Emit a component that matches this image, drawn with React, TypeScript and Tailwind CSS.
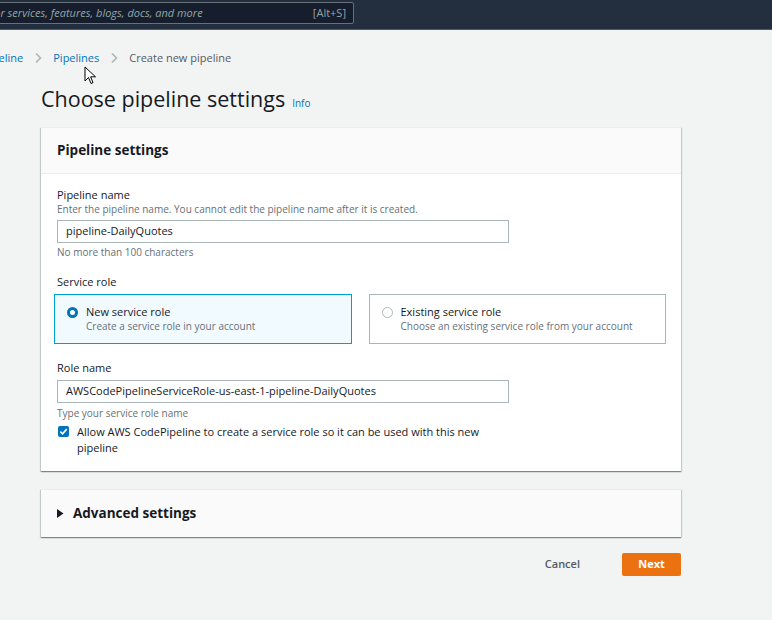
import React from 'react';

const font = { fontFamily: '"Open Sans", "Noto Sans", sans-serif' };

const Chevron = () => (
    <svg className="w-[8px] h-[12px] mx-[11px]" viewBox="0 0 8 12" fill="none">
        <path d="M2 1.5 L6.5 6 L2 10.5" stroke="#aab7b8" strokeWidth="1.6" />
    </svg>
);

const Cursor = () => (
    <svg className="absolute left-[84px] top-[66px] w-[13px] h-[19px]" viewBox="0 0 13 19">
        <path d="M1 1 L1 15 L4.5 11.5 L7 17.5 L9 16.6 L6.6 10.8 L11.5 10.8 Z" fill="#fff" stroke="#000" strokeWidth="1" strokeLinejoin="round" />
    </svg>
);

const Radio = ({ checked }: { checked: boolean }) =>
    checked ? (
        <span className="mt-[3px] w-[11px] h-[11px] rounded-full bg-white border-[3.5px] border-[#0073bb] shrink-0" />
    ) : (
        <span className="mt-[3px] w-[11px] h-[11px] rounded-full bg-white border border-[#aab7b8] shrink-0" />
    );

const Tile = ({ checked, title, desc }: { checked: boolean; title: string; desc: string }) => (
    <div
        className={
            checked
                ? 'h-[50px] border border-[#00a1c9] bg-[#f1faff] flex gap-[8px] pl-[12px] pt-[9px]'
                : 'h-[50px] border border-[#aab7b8] bg-white flex gap-[8px] pl-[12px] pt-[9px]'
        }
    >
        <Radio checked={checked} />
        <div>
            <div className="text-[11px] leading-[16px] text-[#16191f]">{title}</div>
            <div className="text-[10px] leading-[12px] text-[#687078]">{desc}</div>
        </div>
    </div>
);

const App = () => {
    return (
        <div className="relative w-[772px] h-[620px] bg-[#f2f3f3] overflow-hidden" style={font}>
            {/* top nav */}
            <header className="h-[30px] bg-[#232f3e] border-b border-[#545b64] pt-[2px]">
                <div className="ml-[-2px] w-[356px] h-[22px] bg-[#161e2d] border border-[#687078] rounded-[2px] flex items-center overflow-hidden">
                    <span className="ml-[-44px] text-[11px] italic text-[#95a5a6] whitespace-nowrap">
                        Search for services, features, blogs, docs, and more
                    </span>
                    <span className="ml-auto mr-[7px] text-[11px] text-[#95a5a6]">[Alt+S]</span>
                </div>
            </header>

            {/* breadcrumbs */}
            <nav className="flex items-center h-[16px] mt-[20px] text-[11px] whitespace-nowrap">
                <span className="ml-[-44px] text-[#0073bb]">CodePipeline</span>
                <Chevron />
                <span className="text-[#0073bb]">Pipelines</span>
                <Chevron />
                <span className="text-[#545b64]">Create new pipeline</span>
            </nav>

            <div className="ml-[41px] w-[640px]">
                <div className="flex items-baseline gap-[7px] mt-[17px] h-[32px]">
                    <h1 className="text-[21.5px] leading-[32px] text-[#16191f]">Choose pipeline settings</h1>
                    <a className="text-[10px] text-[#0073bb]">Info</a>
                </div>

                {/* pipeline settings card */}
                <section className="mt-[12px] bg-white shadow-[0_1px_1px_0_rgba(0,28,36,0.3),1px_1px_1px_0_rgba(0,28,36,0.15),-1px_1px_1px_0_rgba(0,28,36,0.15)] border-t border-[#eaeded]">
                    <div className="h-[46px] bg-[#fafafa] border-b border-[#eaeded] flex items-center px-[16px]">
                        <h2 className="text-[13.5px] font-bold text-[#16191f]">Pipeline settings</h2>
                    </div>
                    <div className="px-[16px] pt-[13px] pb-[15px]">
                        <label className="block text-[11px] leading-[16px] text-[#16191f]">Pipeline name</label>
                        <div className="text-[10px] leading-[12px] text-[#687078]">
                            Enter the pipeline name. You cannot edit the pipeline name after it is created.
                        </div>
                        <div className="mt-[5px] w-[452px] h-[23px] border border-[#aab7b8] flex items-center px-[8px] text-[11px] text-[#16191f]">
                            pipeline-DailyQuotes
                        </div>
                        <div className="mt-[3px] text-[10px] leading-[13px] text-[#687078]">No more than 100 characters</div>

                        <label className="block mt-[15px] text-[11px] leading-[16px] text-[#16191f]">Service role</label>
                        <div className="mt-[4px] ml-[-3px] w-[612px] grid grid-cols-2 gap-[17px]">
                            <Tile checked title="New service role" desc="Create a service role in your account" />
                            <Tile checked={false} title="Existing service role" desc="Choose an existing service role from your account" />
                        </div>

                        <label className="block mt-[16px] text-[11px] leading-[16px] text-[#16191f]">Role name</label>
                        <div className="mt-[4px] w-[452px] h-[23px] border border-[#aab7b8] flex items-center px-[8px] text-[11px] text-[#16191f]">
                            AWSCodePipelineServiceRole-us-east-1-pipeline-DailyQuotes
                        </div>
                        <div className="mt-[4px] text-[10px] leading-[13px] text-[#687078]">Type your service role name</div>

                        <div className="mt-[4px] flex gap-[8px]">
                            <span className="mt-[2px] ml-[1px] w-[11px] h-[11px] rounded-[2px] bg-[#0073bb] flex items-center justify-center shrink-0">
                                <svg className="w-[9px] h-[9px]" viewBox="0 0 10 10" fill="none">
                                    <path d="M1.5 5.2 L4 7.6 L8.6 2.4" stroke="#fff" strokeWidth="1.8" />
                                </svg>
                            </span>
                            <span className="w-[405px] text-[11px] leading-[16px] text-[#16191f]">
                                Allow AWS CodePipeline to create a service role so it can be used with this new pipeline
                            </span>
                        </div>
                    </div>
                </section>

                {/* advanced settings */}
                <section className="mt-[18px] h-[48px] bg-[#fafafa] flex items-center gap-[9px] pl-[16px] shadow-[0_1px_1px_0_rgba(0,28,36,0.3),1px_1px_1px_0_rgba(0,28,36,0.15),-1px_1px_1px_0_rgba(0,28,36,0.15)] border-t border-[#eaeded]">
                    <svg className="w-[7px] h-[9px]" viewBox="0 0 7 9">
                        <path d="M0 0 L6.5 4.5 L0 9 Z" fill="#16191f" />
                    </svg>
                    <h2 className="text-[13.5px] font-bold text-[#16191f]">Advanced settings</h2>
                </section>

                {/* actions */}
                <div className="mt-[16px] flex items-center justify-end gap-[24px]">
                    <button className="text-[11px] font-semibold text-[#545b64] px-[18px]">Cancel</button>
                    <button className="h-[23px] w-[59px] bg-[#ec7211] rounded-[2px] text-[11px] font-bold text-white">Next</button>
                </div>
            </div>

            <Cursor />
        </div>
    );
};

export default App;
